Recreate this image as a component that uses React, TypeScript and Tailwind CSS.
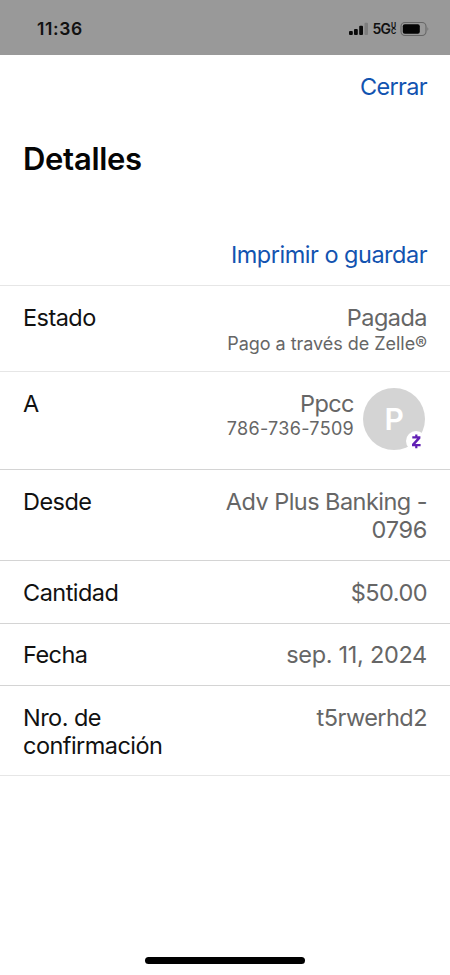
import type { ReactNode } from 'react';

type RowProps = {
  label: ReactNode;
  className: string;
  children: ReactNode;
};

function Row({ label, className, children }: RowProps) {
  return (
    <div className={`flex justify-between border-b px-[23px] leading-7 ${className}`}>
      <dt className="text-[#111]">{label}</dt>
      <dd className="text-right text-[#666]">{children}</dd>
    </div>
  );
}

function StatusBar() {
  return (
    <header className="flex h-[55px] items-start justify-between bg-[#999] pt-[19px] pr-[20px] pl-[37px] text-[#111]">
      <span className="text-[17.5px] leading-5 font-semibold tracking-[0.6px]">11:36</span>
      <div className="flex h-5 items-center">
        <svg width="21" height="14" viewBox="0 0 21 14">
          <rect x="0" y="9" width="3.8" height="4" rx="1" fill="#0a0a0a" />
          <rect x="5" y="7" width="3.8" height="6" rx="1" fill="#0a0a0a" />
          <rect x="10.2" y="3.8" width="3.8" height="9.2" rx="1" fill="#0a0a0a" />
          <rect x="15.5" y="0.8" width="3.5" height="12.2" rx="1" fill="#7d7d7d" />
        </svg>
        <span className="ml-[3px] text-[14px] leading-5 font-semibold tracking-[-0.9px]">5G</span>
        <span className="ml-[1px] flex w-[5px] flex-col text-[7px] leading-[6.5px] font-bold tracking-normal">
          <span>U</span>
          <span>C</span>
        </span>
        <svg className="ml-[4px]" width="30" height="16" viewBox="0 0 30 16">
          <rect x="1" y="1.5" width="25" height="13" rx="4" fill="none" stroke="#666" strokeWidth="1.1" />
          <rect x="2.8" y="3.2" width="17" height="9.6" rx="2" fill="#050505" />
          <path d="M27.5 6 q1.8 2 0 4z" fill="#666" />
        </svg>
      </div>
    </header>
  );
}

function Avatar() {
  return (
    <div className="relative -mt-[2px] mr-[2px] ml-[9px] flex size-[62px] items-center justify-center rounded-full bg-[#d4d4d4]">
      <span className="text-[30px] font-semibold text-white">P</span>
      <span className="absolute right-[-1px] bottom-[-1px] flex size-[20px] items-center justify-center rounded-full bg-white">
        <svg width="12" height="16" viewBox="0 0 12 16">
          <path
            d="M5.2 1.5H7.4V3.3H10.4V5.6L5.4 11H10.6V13.3H7.4V15.2H5.2V13.3H2V11L7 5.6H2.3V3.3H5.2Z"
            fill="#6120b5"
          />
        </svg>
      </span>
    </div>
  );
}

export default function App() {
  return (
    <div className="flex h-[975px] w-[450px] flex-col overflow-hidden bg-white font-['Inter',sans-serif] text-[23.5px] tracking-[-0.54px]">
      <StatusBar />
      <div className="flex justify-end pt-[18px] pr-[23px]">
        <button className="leading-7 tracking-[-0.65px] text-[#1253b0]">Cerrar</button>
      </div>
      <h1 className="mt-[40px] ml-[23px] text-[31px] leading-9 font-semibold tracking-[-0.3px] text-[#050505]">
        Detalles
      </h1>
      <div className="mt-[64px] flex h-[44px] justify-end pr-[23px]">
        <button className="h-7 leading-7 tracking-[-0.5px] text-[#1253b0]">Imprimir o guardar</button>
      </div>
      <dl className="border-t border-[#e6e6e6]">
        <Row label="Estado" className="h-[86px] border-[#e6e6e6] pt-[18px]">
          <p>Pagada</p>
          <p className="text-[18px] leading-6 tracking-[-0.03px]">Pago a través de Zelle®</p>
        </Row>
        <Row label="A" className="h-[98px] border-[#d4d4d4] pt-[18px]">
          <div className="flex">
            <div>
              <p>Ppcc</p>
              <p className="text-[18px] leading-[22px] tracking-[0.3px]">786-736-7509</p>
            </div>
            <Avatar />
          </div>
        </Row>
        <Row label="Desde" className="h-[91px] border-[#d4d4d4] pt-[18px]">
          Adv Plus Banking -<br />
          <span className="tracking-[-0.3px]">0796</span>
        </Row>
        <Row label="Cantidad" className="h-[63px] border-[#d4d4d4] pt-[18px]">
          $50.00
        </Row>
        <Row label="Fecha" className="h-[62px] border-[#d4d4d4] pt-[17px]">
          <span className="tracking-[-0.3px]">sep. 11, 2024</span>
        </Row>
        <Row
          label={
            <>
              Nro. de
              <br />
              confirmación
            </>
          }
          className="h-[90px] border-[#e6e6e6] pt-[18px]"
        >
          t5rwerhd2
        </Row>
      </dl>
      <div className="mx-auto mt-auto mb-[11px] h-[7px] w-[160px] rounded-full bg-black" />
    </div>
  );
}
